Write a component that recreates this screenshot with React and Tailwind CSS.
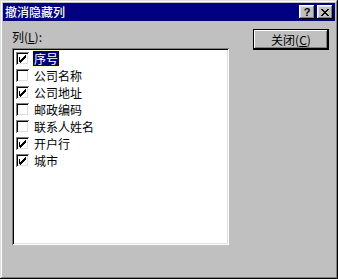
import React from "react";

const items = [
  { label: "序号", checked: true, selected: true },
  { label: "公司名称", checked: false },
  { label: "公司地址", checked: true },
  { label: "邮政编码", checked: false },
  { label: "联系人姓名", checked: false },
  { label: "开户行", checked: true },
  { label: "城市", checked: true },
];

const font = { fontFamily: '"Noto Sans CJK SC", "Liberation Sans", sans-serif' };

function Check({ checked }) {
  return (
    <div className="w-[13px] h-[13px] bg-white shrink-0 shadow-[inset_1px_1px_#808080,inset_-1px_-1px_#fff,inset_2px_2px_#000,inset_-2px_-2px_#dfdfdf]">
      {checked && (
        <svg width="13" height="13" viewBox="0 0 13 13" shapeRendering="crispEdges">
          <path d="M3 5h1v3h1V7h1V6h1V5h1V4h1V3h1v3H9v1H8v1H7v1H6v1H5v1H4v-1H3z" fill="#000" />
        </svg>
      )}
    </div>
  );
}

function TitleButton({ children }) {
  return (
    <div className="w-[16px] h-[14px] bg-[#c0c0c0] flex items-center justify-center shadow-[inset_-1px_-1px_#000,inset_1px_1px_#fff,inset_-2px_-2px_#808080,inset_2px_2px_#dfdfdf]">
      {children}
    </div>
  );
}

export default function App() {
  return (
    <div
      className="w-[338px] h-[279px] bg-[#c0c0c0] p-[3px] flex flex-col shadow-[inset_-1px_-1px_#000,inset_1px_1px_#dfdfdf,inset_-2px_-2px_#808080,inset_2px_2px_#fff]"
      style={font}
    >
      {/* title bar */}
      <div className="h-[18px] bg-[#000080] flex items-center pl-[2px] pr-[2px]">
        <span className="text-white text-[12px] leading-none font-medium flex-1">撤消隐藏列</span>
        <TitleButton>
          <span className="text-black text-[11px] font-bold leading-none" style={{ fontFamily: '"Liberation Sans", sans-serif' }}>?</span>
        </TitleButton>
        <div className="w-[2px]" />
        <TitleButton>
          <svg width="8" height="7" viewBox="0 0 8 7" shapeRendering="crispEdges">
            <path d="M0 0h2v1h1v1h2V1h1V0h2v1H7v1H6v1H5v1h1v1h1v1h1v1H6V6H5V5H3v1H2v1H0V6h1V5h1V4h1V3H2V2H1V1H0z" fill="#000" />
          </svg>
        </TitleButton>
      </div>

      <div className="flex flex-1 pl-[9px] pt-[9px]">
        <div className="flex flex-col">
          <div className="text-[12px] leading-[14px] text-black h-[16px]">
            列(<span className="underline">L</span>):
          </div>
          <div className="mt-[2px] w-[217px] h-[197px] bg-white p-[2px] shadow-[inset_1px_1px_#808080,inset_-1px_-1px_#fff,inset_2px_2px_#000,inset_-2px_-2px_#dfdfdf]">
            {items.map((it) => (
              <div key={it.label} className="h-[17px] flex items-center pl-[2px]">
                <Check checked={it.checked} />
                <span
                  className={
                    "ml-[4px] px-[1px] text-[12px] leading-[15px] h-[15px] " +
                    (it.selected
                      ? "bg-[#000080] text-white outline outline-1 outline-dotted outline-[#ffff80]"
                      : "text-black")
                  }
                >
                  {it.label}
                </span>
              </div>
            ))}
          </div>
        </div>
        <div className="ml-[24px]">
          <div className="w-[76px] h-[21px] mt-[-1px] flex items-center justify-center text-[12px] text-black bg-[#c0c0c0] shadow-[inset_0_0_0_1px_#000,inset_-2px_-2px_#000,inset_2px_2px_#fff,inset_-3px_-3px_#808080]">
            关闭(<span className="underline">C</span>)
          </div>
        </div>
      </div>
    </div>
  );
}
